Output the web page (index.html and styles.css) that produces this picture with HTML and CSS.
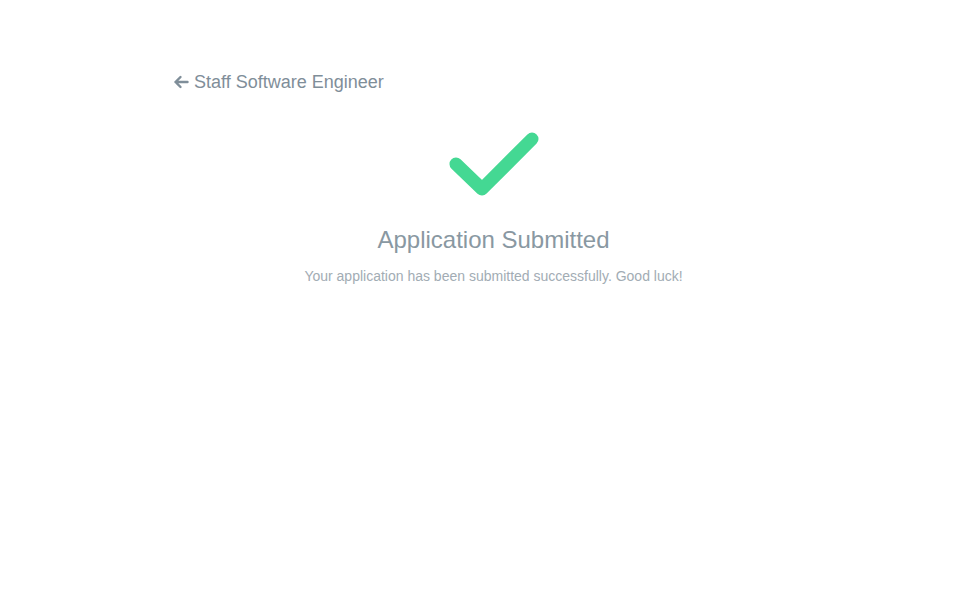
FILE: index.html
```html
<!DOCTYPE html>
<html>
<head>
<meta charset="utf-8">
<link rel="stylesheet" href="styles.css">
</head>
<body>
<div class="page">
  <a class="back" href="#">
    <svg class="arrow" width="16" height="14" viewBox="0 0 16 14"><path d="M14.5 7H2.5M7.5 2L2.5 7L7.5 12" fill="none" stroke="currentColor" stroke-width="2.4" stroke-linecap="round" stroke-linejoin="round"/></svg>
    <span>Staff Software Engineer</span>
  </a>
  <div class="result">
    <svg class="check" width="92" height="70" viewBox="0 0 92 70"><path d="M8 35L34 60L84 10" fill="none" stroke="#44d893" stroke-width="13" stroke-linecap="round" stroke-linejoin="round"/></svg>
    <h1 class="title">Application Submitted</h1>
    <p class="sub">Your application has been submitted successfully. Good luck!</p>
  </div>
</div>
</body>
</html>
```

FILE: styles.css
```css
html, body {
  margin: 0;
  padding: 0;
  background: #fff;
  font-family: "Liberation Sans", Arial, sans-serif;
}
.page {
  margin-left: 173px;
  width: 641px;
  padding-top: 71px;
}
.back {
  display: inline-flex;
  align-items: center;
  gap: 5px;
  color: #7f8e99;
  text-decoration: none;
  font-size: 18px;
  line-height: 22px;
}
.arrow {
  display: block;
}
.result {
  display: flex;
  flex-direction: column;
  align-items: center;
  margin-top: 36px;
}
.check {
  display: block;
}
.title {
  margin: 27px 0 0;
  font-weight: normal;
  font-size: 24px;
  line-height: 28px;
  color: #8998a2;
}
.sub {
  margin: 13px 0 0;
  font-size: 14px;
  line-height: 18px;
  color: #a2acb4;
}
```
